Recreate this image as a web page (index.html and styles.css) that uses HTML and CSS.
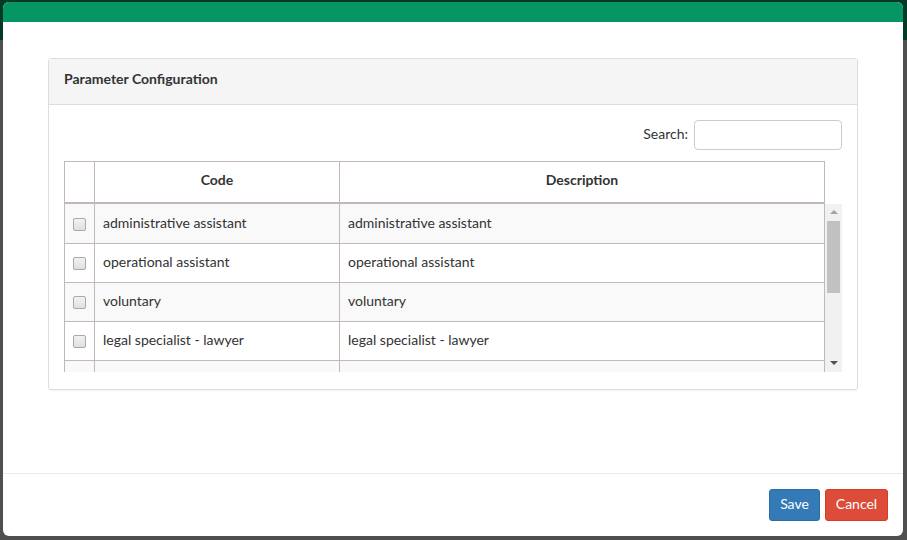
FILE: index.html
```html
<!DOCTYPE html>
<html>
<head>
<meta charset="utf-8">
<link rel="stylesheet" href="styles.css">
</head>
<body>
<div class="modal">
  <div class="modal-top"></div>
  <div class="modal-body">
    <div class="panel">
      <div class="panel-heading">Parameter Configuration</div>
      <div class="panel-body">
        <div class="search-row">
          <label class="search-label">Search:</label>
          <input class="search-input" type="text">
        </div>
        <div class="dt">
          <div class="dt-head">
            <table class="grid">
              <colgroup><col class="c-check"><col class="c-code"><col></colgroup>
              <thead>
                <tr><th></th><th>Code</th><th>Description</th></tr>
              </thead>
            </table>
          </div>
          <div class="dt-scroll">
            <div class="dt-body">
              <table class="grid">
                <colgroup><col class="c-check"><col class="c-code"><col></colgroup>
                <tbody>
                  <tr class="odd"><td class="chk"><input type="checkbox"></td><td>administrative assistant</td><td>administrative assistant</td></tr>
                  <tr><td class="chk"><input type="checkbox"></td><td>operational assistant</td><td>operational assistant</td></tr>
                  <tr class="odd"><td class="chk"><input type="checkbox"></td><td>voluntary</td><td>voluntary</td></tr>
                  <tr><td class="chk"><input type="checkbox"></td><td>legal specialist - lawyer</td><td>legal specialist - lawyer</td></tr>
                  <tr class="odd"><td class="chk"></td><td></td><td></td></tr>
                </tbody>
              </table>
            </div>
            <div class="sbar">
              <div class="sbar-up"></div>
              <div class="sbar-thumb"></div>
              <div class="sbar-space"></div>
              <div class="sbar-down"></div>
            </div>
          </div>
        </div>
      </div>
    </div>
  </div>
  <div class="modal-footer">
    <button class="btn btn-save">Save</button>
    <button class="btn btn-cancel">Cancel</button>
  </div>
</div>
</body>
</html>
```

FILE: styles.css
```css
html, body {
  margin: 0;
  padding: 0;
}
body {
  width: 907px;
  height: 540px;
  overflow: hidden;
  background: linear-gradient(to bottom, #023a27 0, #023a27 40px, #4f4f4f 40px, #4f4f4f 100%);
  padding: 2px 4px 0 3px;
  box-sizing: border-box;
  font-family: "Lato", "Liberation Sans", sans-serif;
  font-size: 14px;
  color: #333;
}
.modal {
  width: 900px;
  height: 534px;
  background: #fff;
  border-radius: 6px;
  overflow: hidden;
  display: flex;
  flex-direction: column;
}
.modal-top {
  height: 20px;
  background: #059664;
  flex: none;
}
.modal-body {
  flex: 1;
  padding: 36px 45px 0 45px;
  border-bottom: 1px solid #eaeaea;
}
.panel {
  border: 1px solid #ddd;
  border-radius: 3px;
  box-shadow: 0 1px 1px rgba(0,0,0,0.05);
  height: 332px;
  box-sizing: border-box;
}
.panel-heading {
  height: 46px;
  box-sizing: border-box;
  background: #f5f5f5;
  border-bottom: 1px solid #ddd;
  padding: 0 15px 7px 15px;
  display: flex;
  align-items: center;
  font-weight: bold;
  font-size: 14px;
  color: #333;
}
.panel-body {
  padding: 15px 15px 0 15px;
}
.search-row {
  display: flex;
  justify-content: flex-end;
  align-items: center;
  gap: 6px;
  height: 30px;
}
.search-label {
  font-size: 14px;
  color: #333;
  padding-bottom: 4px;
}
.search-input {
  width: 148px;
  height: 30px;
  box-sizing: border-box;
  border: 1px solid #ccc;
  border-radius: 4px;
  margin: 0;
  padding: 0 8px;
}
.dt {
  margin-top: 11px;
}
.dt-head {
  width: 761px;
}
.grid {
  width: 761px;
  table-layout: fixed;
  border-collapse: collapse;
}
.c-check { width: 30px; }
.c-code { width: 245px; }
.grid th, .grid td {
  border: 1px solid #c2b8b8;
  padding: 0 8px;
  text-align: left;
  font-size: 14px;
}
.grid th {
  height: 35px;
  text-align: center;
  font-weight: bold;
  border-bottom: 2px solid #c2b8b8;
  color: #333;
  padding-bottom: 5px;
}
.grid td {
  height: 39px;
  box-sizing: border-box;
  padding-bottom: 2px;
}
.grid tbody tr:first-child td {
  border-top: none;
}
.grid tr.odd td {
  background: #f9f9f9;
}
.grid td.chk {
  padding: 0 0 1px 0;
  text-align: center;
}
.grid td.chk input {
  -webkit-appearance: none;
  appearance: none;
  margin: 0;
  vertical-align: middle;
  width: 13px;
  height: 13px;
  box-sizing: border-box;
  border: 1px solid #a9a9a9;
  border-radius: 2px;
  background: linear-gradient(to bottom, #f2f2f2, #e0e0e0);
}
.dt-scroll {
  display: flex;
  height: 168px;
  width: 778px;
  overflow: hidden;
}
.dt-body {
  width: 761px;
  height: 168px;
  overflow: hidden;
}
.sbar {
  width: 17px;
  height: 168px;
  background: #f1f1f1;
  display: flex;
  flex-direction: column;
  align-items: center;
}
.sbar-up, .sbar-down {
  width: 17px;
  height: 17px;
  flex: none;
  position: relative;
}
.sbar-up::after {
  content: "";
  position: absolute;
  left: 5px;
  top: 6px;
  border-left: 4px solid transparent;
  border-right: 4px solid transparent;
  border-bottom: 4px solid #a3a3a3;
}
.sbar-down::after {
  content: "";
  position: absolute;
  left: 5px;
  top: 6px;
  border-left: 4px solid transparent;
  border-right: 4px solid transparent;
  border-top: 4px solid #505050;
}
.sbar-thumb {
  width: 13px;
  height: 72px;
  background: #c1c1c1;
  flex: none;
}
.sbar-space {
  flex: 1;
}
.modal-footer {
  height: 62px;
  flex: none;
  display: flex;
  justify-content: flex-end;
  align-items: flex-start;
  padding: 15px 15px 0 0;
  box-sizing: border-box;
  gap: 5px;
}
.btn {
  font-family: "Lato", "Liberation Sans", sans-serif;
  font-size: 14px;
  height: 32px;
  border-radius: 3px;
  color: #fff;
  border: 1px solid transparent;
  margin: 0;
  padding: 0 0 3px 0;
}
.btn-save {
  background: #337ab7;
  border-color: #2e6da4;
  width: 51px;
}
.btn-cancel {
  background: #dd4b39;
  border-color: #d73925;
  width: 63px;
}
```
